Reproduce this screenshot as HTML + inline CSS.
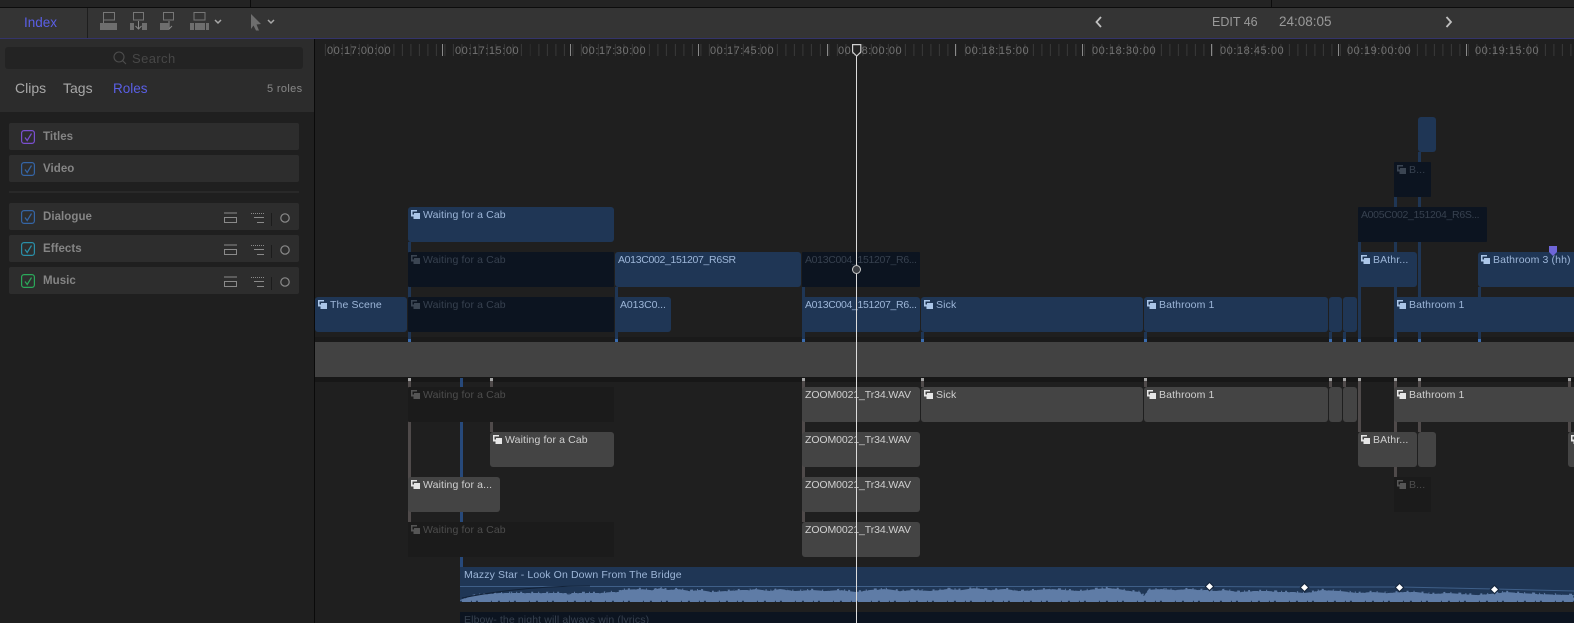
<!DOCTYPE html>
<html><head><meta charset="utf-8"><style>
html,body{margin:0;padding:0;background:#1f1f1f}
#p{position:relative;width:1574px;height:623px;overflow:hidden;background:#1f1f1f;font-family:"Liberation Sans",sans-serif}
#p div,#p span,#p svg{position:absolute}
.c{height:35px;border-radius:3px;overflow:hidden;font-size:10.500px;letter-spacing:.12px;white-space:nowrap;line-height:13px}
.c span{left:15px;top:2px}
.c.n span{left:3px}
.c.z span{letter-spacing:-.1px}
.c.a span{letter-spacing:-.33px}
.c svg{left:3px;top:3px}
.b{background:#1f3655;color:#9db6d8;fill:#abc6e8}
.d{background:#0c1420;color:#37414f;fill:#3b4552;border-radius:1px}
.g{background:#444;color:#d0d0d0;fill:#e6e6e6}
.k{background:#1b1b1b;color:#4d4d4d;fill:#555;border-radius:1px}
.v{width:3px;background:#1f3655}
.w{width:3px;background:#4f4a4a}
.t{width:3px;height:3px;background:#3b6db0}
.u{width:3px;height:3px;background:#a5a5a5}
.r{left:9px;width:290px;height:27px;background:#2d2d2d;border-radius:2px}
.r .l{left:34px;top:7px;font-size:11.500px;letter-spacing:.05px;font-weight:bold;color:#858585;line-height:15px}
.r>svg{left:12px;top:7px}
.tm{top:45px;font-size:11px;letter-spacing:.55px;color:#747474;line-height:13px;white-space:nowrap;background:none}
.mj{top:44px;width:1px;height:12px;background:#8a8a8a}
.kf{width:5px;height:5px;background:#fff;transform:rotate(45deg);outline:1px solid #16263c}
</style></head><body><div id="p">
<svg width="0" height="0" style="position:absolute"><defs>
<path id="ci" d="M0 0H6V1.500H1.500V4.500H3V3H9V9H2.500V6.500H0Z"/>
<g id="ctl" fill="none" stroke="#8a8a8a" stroke-width="1">
<path d="M215 0H228M215.500 4.500H227.500V9.500H215.500Z" transform="translate(-191 0)"/>
<path d="M51 3.500H64" stroke-dasharray="1 1" transform="translate(0 -3)"/><path d="M54 4.500H64M57 9.500H64" transform="translate(0 0)"/>
<path d="M71.500 0V16" stroke="#1c1c1c"/><circle cx="85" cy="5" r="4.200" stroke-width="1.200"/></g>
<path id="wv" d="M460 602V600L468 597L478 595L488 594L500 593L512 593V593L540 593L566 593L569 595L572 593L600 593L612 592H620V590L640 589L650 590H654L660 588L668 590L678 589L690 591L700 590L712 592L726 591L742 590H750L755 589L770 591L780 589L795 591L812 590L826 591L840 590L856 592L870 590L886 589L900 591L915 590L930 591L948 589L962 590L975 588L990 590L1005 589L1020 591L1036 590L1050 589L1066 590L1080 591L1096 589L1108 588L1118 589L1130 591L1140 592L1144 596L1148 590L1160 589L1175 590L1190 589L1200 590L1208 590L1216 591L1224 590L1240 592L1254 591L1268 591L1280 592L1294 592L1304 593L1312 592L1322 590L1340 591L1358 593L1372 592L1388 593L1402 592L1416 592L1432 594L1448 593L1462 594L1476 595L1490 594L1506 592L1520 593L1538 594L1552 594.500L1574 595V602Z"/>
</defs></svg>

<!-- top chrome -->
<div style="left:0;top:0;width:1574px;height:7px;background:#232323"></div>
<div style="left:0;top:7px;width:1574px;height:1px;background:#0c0c0c"></div>
<div style="left:250px;top:0;width:1px;height:7px;background:#0c0c0c"></div>
<div style="left:1271px;top:0;width:1px;height:7px;background:#0c0c0c"></div>
<div style="left:0;top:8px;width:1574px;height:30px;background:#343434"></div>
<div style="left:87px;top:8px;width:1px;height:30px;background:#1e1e1e"></div>
<div style="left:0;top:38px;width:1574px;height:1px;background:#34346a"></div>
<div style="left:24px;top:15px;font-size:13.500px;line-height:16px;color:#5a5fe6">Index</div>
<svg style="left:95px;top:8px" width="200" height="30" viewBox="0 0 200 30">
<g fill="none" stroke="#777" stroke-width="1">
<path d="M8.500 15V4.500H19.500V12H8.500"/><path d="M38.500 4.500H48.500V12H38.500Z"/><path d="M68.500 4.500H78.500V12H68.500Z"/><path d="M99 4.500H110V12H99Z"/>
<path d="M43.500 13V21M40.500 18L43.500 21L46.500 18M74 13V21M71 18L74 21L77 18" stroke="#888"/>
</g>
<g fill="#6e6e6e"><rect x="5" y="15" width="17" height="7"/><rect x="35" y="15" width="4" height="7"/><rect x="47" y="15" width="5" height="7"/><rect x="65" y="15" width="9" height="7"/><rect x="95" y="15" width="4" height="7"/><rect x="100" y="15" width="10" height="7"/><rect x="111" y="15" width="3" height="7"/>
<path d="M156 6L166 16L161.500 16.500L164 22.500L161 22.500L158.500 17.500L156 21Z" /></g>
<g fill="none" stroke="#a8a8a8" stroke-width="1.500"><path d="M120 12L123 15L126 12M173 12L176 15L179 12"/></g>
</svg>
<div style="left:1212px;top:14px;font-size:12.500px;line-height:16px;color:#9a9a9a">EDIT 46</div>
<div style="left:1279px;top:14px;font-size:13.500px;line-height:16px;color:#9a9a9a">24:08:05</div>
<svg style="left:1093px;top:15px" width="362" height="14" fill="none" stroke="#c0c0c0" stroke-width="1.800"><path d="M8 2L3.500 7L8 12M353.500 2L358 7L353.500 12"/></svg>

<!-- sidebar -->
<div style="left:0;top:39px;width:314px;height:73px;background:#2c2c2c"></div>
<div style="left:0;top:112px;width:314px;height:511px;background:#1f1f1f"></div>
<div style="left:314px;top:39px;width:1px;height:584px;background:#0a0a0a"></div>
<div style="left:5px;top:47px;width:298px;height:22px;background:#232323;border-radius:3px"></div>
<svg style="left:113px;top:51px" width="14" height="14" fill="none" stroke="#4d4d4d" stroke-width="1.100"><circle cx="6" cy="6" r="5"/><path d="M9.500 9.500L13 13"/></svg>
<div style="left:132px;top:51px;font-size:13px;letter-spacing:.4px;line-height:16px;color:#474747">Search</div>
<div style="left:15px;top:80px;font-size:14px;line-height:17px;color:#a8a8a8">Clips</div>
<div style="left:63px;top:80px;font-size:14px;line-height:17px;color:#a8a8a8">Tags</div>
<div style="left:113px;top:80px;font-size:13.500px;line-height:17px;color:#5a5fe6">Roles</div>
<div style="left:267px;top:82px;font-size:11px;letter-spacing:.35px;line-height:14px;color:#888">5 roles</div>

<div class="r" style="top:123px"><svg width="14" height="14" fill="none" stroke="#7a4fd0" stroke-width="1.200"><rect x=".6" y=".6" width="12.800" height="12.800" rx="2.500"/><path d="M4 7.500L6.200 10.500L10.500 3.500"/></svg><div class="l">Titles</div></div>
<div class="r" style="top:155px"><svg width="14" height="14" fill="none" stroke="#3565a5" stroke-width="1.200"><rect x=".6" y=".6" width="12.800" height="12.800" rx="2.500"/><path d="M4 7.500L6.200 10.500L10.500 3.500"/></svg><div class="l">Video</div></div>
<div style="left:9px;top:191px;width:290px;height:2px;background:#292929"></div>
<div class="r" style="top:203px"><svg width="14" height="14" fill="none" stroke="#3565a5" stroke-width="1.200"><rect x=".6" y=".6" width="12.800" height="12.800" rx="2.500"/><path d="M4 7.500L6.200 10.500L10.500 3.500"/></svg><div class="l">Dialogue</div><svg style="left:191px;top:5px" width="100" height="18"><use href="#ctl" transform="translate(0 5)"/></svg></div>
<div class="r" style="top:235px"><svg width="14" height="14" fill="none" stroke="#2a8fa8" stroke-width="1.200"><rect x=".6" y=".6" width="12.800" height="12.800" rx="2.500"/><path d="M4 7.500L6.200 10.500L10.500 3.500"/></svg><div class="l">Effects</div><svg style="left:191px;top:5px" width="100" height="18"><use href="#ctl" transform="translate(0 5)"/></svg></div>
<div class="r" style="top:267px"><svg width="14" height="14" fill="none" stroke="#2ba85a" stroke-width="1.200"><rect x=".6" y=".6" width="12.800" height="12.800" rx="2.500"/><path d="M4 7.500L6.200 10.500L10.500 3.500"/></svg><div class="l">Music</div><svg style="left:191px;top:5px" width="100" height="18"><use href="#ctl" transform="translate(0 5)"/></svg></div>

<!-- ruler -->
<div style="left:315px;top:44px;width:1259px;height:12px;background:repeating-linear-gradient(90deg,transparent 0,transparent 7.530px,#383838 7.530px,#383838 8.530px);background-position:2.400px 0"></div>
<div class="mj" style="left:442px"></div><div class="mj" style="left:570px"></div><div class="mj" style="left:698px"></div><div class="mj" style="left:827px"></div><div class="mj" style="left:955px"></div><div class="mj" style="left:1082px"></div><div class="mj" style="left:1211px"></div><div class="mj" style="left:1338px"></div><div class="mj" style="left:1466px"></div>
<div class="tm" style="left:327px">00:17:00:00</div>
<div class="tm" style="left:455px">00:17:15:00</div>
<div class="tm" style="left:582px">00:17:30:00</div>
<div class="tm" style="left:710px">00:17:45:00</div>
<div class="tm" style="left:838px">00:18:00:00</div>
<div class="tm" style="left:965px">00:18:15:00</div>
<div class="tm" style="left:1092px">00:18:30:00</div>
<div class="tm" style="left:1220px">00:18:45:00</div>
<div class="tm" style="left:1347px">00:19:00:00</div>
<div class="tm" style="left:1475px">00:19:15:00</div>

<!-- band -->
<div style="left:315px;top:337px;width:1259px;height:5px;background:#1a1a1a"></div>
<div style="left:315px;top:342px;width:1259px;height:35px;background:#424242"></div>
<div style="left:315px;top:377px;width:1259px;height:5px;background:#171717"></div>

<!-- upper connectors -->
<div class="v" style="left:408px;top:242px;height:100px"></div>
<div class="v" style="left:615px;top:287px;height:55px"></div>
<div class="v" style="left:802px;top:287px;height:55px"></div>
<div class="v" style="left:921px;top:332px;height:10px"></div>
<div class="v" style="left:1144px;top:332px;height:10px"></div>
<div class="v" style="left:1329px;top:332px;height:10px"></div>
<div class="v" style="left:1343px;top:332px;height:10px"></div>
<div class="v" style="left:1358px;top:242px;height:100px"></div>
<div class="v" style="left:1394px;top:197px;height:145px"></div>
<div class="v" style="left:1418px;top:152px;height:190px"></div>
<div class="v" style="left:1478px;top:287px;height:55px"></div>
<div class="t" style="left:408px;top:339px"></div><div class="t" style="left:615px;top:339px"></div><div class="t" style="left:802px;top:339px"></div><div class="t" style="left:921px;top:339px"></div><div class="t" style="left:1144px;top:339px"></div><div class="t" style="left:1329px;top:339px"></div><div class="t" style="left:1343px;top:339px"></div><div class="t" style="left:1358px;top:339px"></div><div class="t" style="left:1394px;top:339px"></div><div class="t" style="left:1418px;top:339px"></div><div class="t" style="left:1478px;top:339px"></div>

<!-- lower connectors -->
<div class="w" style="left:408px;top:378px;height:144px"></div>
<div class="v" style="left:460px;top:378px;height:189px;background:#27497a"></div>
<div class="w" style="left:490px;top:378px;height:54px"></div>
<div class="w" style="left:802px;top:378px;height:144px"></div>
<div class="w" style="left:921px;top:378px;height:9px"></div>
<div class="w" style="left:1144px;top:378px;height:9px"></div>
<div class="w" style="left:1329px;top:378px;height:9px"></div>
<div class="w" style="left:1343px;top:378px;height:9px"></div>
<div class="w" style="left:1358px;top:378px;height:54px"></div>
<div class="w" style="left:1394px;top:378px;height:99px"></div>
<div class="w" style="left:1418px;top:378px;height:54px"></div>
<div class="w" style="left:1568px;top:378px;height:54px"></div>
<div class="u" style="left:408px;top:378px"></div><div class="u" style="left:490px;top:378px"></div><div class="u" style="left:802px;top:378px"></div><div class="u" style="left:921px;top:378px"></div><div class="u" style="left:1144px;top:378px"></div><div class="u" style="left:1329px;top:378px"></div><div class="u" style="left:1343px;top:378px"></div><div class="u" style="left:1358px;top:378px"></div><div class="u" style="left:1394px;top:378px"></div><div class="u" style="left:1418px;top:378px"></div><div class="u" style="left:1568px;top:378px"></div>

<!-- upper clips -->
<div class="c b" style="left:1418px;top:117px;width:18px"></div>
<div class="c d" style="left:1394px;top:162px;width:37px"><svg width="9" height="9"><use href="#ci"/></svg><span>B...</span></div>
<div class="c b" style="left:408px;top:207px;width:206px"><svg width="9" height="9"><use href="#ci"/></svg><span>Waiting for a Cab</span></div>
<div class="c d n a" style="left:1358px;top:207px;width:129px"><span>A005C002_151204_R6S...</span></div>
<div class="c d" style="left:408px;top:252px;width:206px"><svg width="9" height="9"><use href="#ci"/></svg><span>Waiting for a Cab</span></div>
<div class="c b n a" style="left:615px;top:252px;width:186px"><span>A013C002_151207_R6SR</span></div>
<div class="c d n a" style="left:802px;top:252px;width:118px"><span>A013C004_151207_R6...</span></div>
<div class="c b" style="left:1358px;top:252px;width:59px"><svg width="9" height="9"><use href="#ci"/></svg><span>BAthr...</span></div>
<div class="c b" style="left:1478px;top:252px;width:100px"><svg width="9" height="9"><use href="#ci"/></svg><span>Bathroom 3 (hh)</span></div>
<div class="c b" style="left:315px;top:297px;width:92px"><svg width="9" height="9"><use href="#ci"/></svg><span>The Scene</span></div>
<div class="c d" style="left:408px;top:297px;width:206px"><svg width="9" height="9"><use href="#ci"/></svg><span>Waiting for a Cab</span></div>
<div class="c b n z" style="left:615px;top:297px;width:56px"><span style="left:5px">A013C0...</span></div>
<div class="c b n a" style="left:802px;top:297px;width:118px"><span>A013C004_151207_R6...</span></div>
<div class="c b" style="left:921px;top:297px;width:222px"><svg width="9" height="9"><use href="#ci"/></svg><span>Sick</span></div>
<div class="c b" style="left:1144px;top:297px;width:184px"><svg width="9" height="9"><use href="#ci"/></svg><span>Bathroom 1</span></div>
<div class="c b" style="left:1329px;top:297px;width:13px"></div>
<div class="c b" style="left:1343px;top:297px;width:14px"></div>
<div class="c b" style="left:1394px;top:297px;width:185px"><svg width="9" height="9"><use href="#ci"/></svg><span>Bathroom 1</span></div>
<svg style="left:1549px;top:246px" width="8" height="10" fill="#6f66d8"><path d="M0 0H8V6L4 10L0 6Z"/></svg>

<!-- lower clips -->
<div class="c k" style="left:408px;top:387px;width:206px"><svg width="9" height="9"><use href="#ci"/></svg><span>Waiting for a Cab</span></div>
<div class="c g n z" style="left:802px;top:387px;width:118px"><span>ZOOM0021_Tr34.WAV</span></div>
<div class="c g" style="left:921px;top:387px;width:222px"><svg width="9" height="9"><use href="#ci"/></svg><span>Sick</span></div>
<div class="c g" style="left:1144px;top:387px;width:184px"><svg width="9" height="9"><use href="#ci"/></svg><span>Bathroom 1</span></div>
<div class="c g" style="left:1329px;top:387px;width:13px"></div>
<div class="c g" style="left:1343px;top:387px;width:14px"></div>
<div class="c g" style="left:1394px;top:387px;width:185px"><svg width="9" height="9"><use href="#ci"/></svg><span>Bathroom 1</span></div>
<div class="c g" style="left:490px;top:432px;width:124px"><svg width="9" height="9"><use href="#ci"/></svg><span>Waiting for a Cab</span></div>
<div class="c g n z" style="left:802px;top:432px;width:118px"><span>ZOOM0021_Tr34.WAV</span></div>
<div class="c g" style="left:1358px;top:432px;width:59px"><svg width="9" height="9"><use href="#ci"/></svg><span>BAthr...</span></div>
<div class="c g" style="left:1418px;top:432px;width:18px"></div>
<div class="c g" style="left:1568px;top:432px;width:12px"><svg width="9" height="9"><use href="#ci"/></svg></div>
<div class="c g" style="left:408px;top:477px;width:92px"><svg width="9" height="9"><use href="#ci"/></svg><span>Waiting for a...</span></div>
<div class="c g n z" style="left:802px;top:477px;width:118px"><span>ZOOM0021_Tr34.WAV</span></div>
<div class="c k" style="left:1394px;top:477px;width:37px"><svg width="9" height="9"><use href="#ci"/></svg><span>B...</span></div>
<div class="c k" style="left:408px;top:522px;width:206px"><svg width="9" height="9"><use href="#ci"/></svg><span>Waiting for a Cab</span></div>
<div class="c g n z" style="left:802px;top:522px;width:118px"><span>ZOOM0021_Tr34.WAV</span></div>

<!-- audio -->
<div style="left:460px;top:567px;width:1114px;height:35px;background:#1f3655"></div>
<div style="left:464px;top:569px;font-size:10.500px;letter-spacing:.12px;line-height:13px;color:#9db6d8;white-space:nowrap">Mazzy Star - Look On Down From The Bridge</div>
<svg style="left:460px;top:567px" width="1114" height="35" viewBox="460 567 1114 35">
<path d="M460 586.500H1210L1305 587L1400 587L1495 589L1574 591" fill="none" stroke="#3f5f88" stroke-width="1"/>
<use href="#wv" fill="#5f7ca6"/>
<use href="#wv" fill="none" stroke="#5f7ca6" stroke-width="2.500" stroke-dasharray="2 5 1 7 3 4 1 3 2 9"/>
<use href="#wv" fill="none" stroke="#1f3655" stroke-width="1.500" stroke-dasharray="1 9 2 6 1 13 2 4" stroke-dashoffset="3" transform="translate(0 -.5)"/>
<path d="M462 598Q520 586 590 586" fill="none" stroke="#122238" stroke-width="1"/>
</svg>
<div style="left:460px;top:602px;width:1114px;height:3px;background:#1f1f1f"></div>
<div class="kf" style="left:1207px;top:584px"></div>
<div class="kf" style="left:1302px;top:585px"></div>
<div class="kf" style="left:1397px;top:585px"></div>
<div class="kf" style="left:1492px;top:587px"></div>
<div style="left:460px;top:612px;width:1114px;height:11px;background:#0c1420;overflow:hidden"><span style="left:4px;top:2px;font-size:10.500px;letter-spacing:.12px;line-height:13px;color:#37414f;white-space:nowrap">Elbow- the night will always win (lyrics)</span></div>

<!-- playhead -->
<div style="left:856px;top:52px;width:1px;height:571px;background:#dcdcdc"></div>
<svg style="left:851px;top:43px" width="12" height="15" fill="#222" stroke="#cfcfcf" stroke-width="1.200"><path d="M1.600 1.600H9.800V9L5.700 13L1.600 9Z"/></svg>
<svg style="left:851px;top:264px" width="11" height="11"><circle cx="5.500" cy="5.500" r="4" fill="#3a3d42" stroke="#c8c8c8" stroke-width="1"/></svg>
</div></body></html>
